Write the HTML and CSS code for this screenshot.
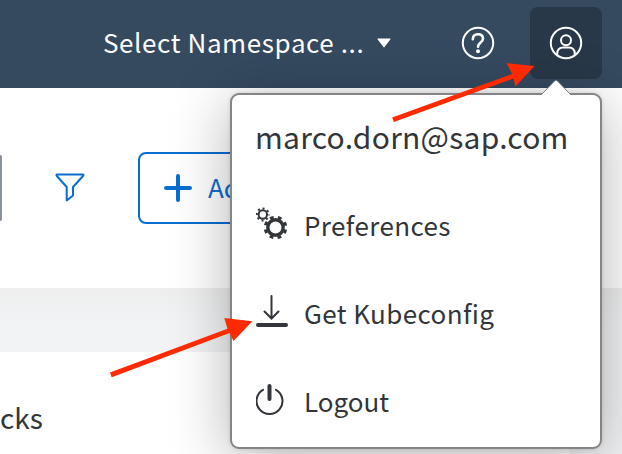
FILE: index.html
```html
<!DOCTYPE html>
<html lang="en">
<head>
<meta charset="utf-8">
<title>Console</title>
<link rel="stylesheet" href="styles.css">
</head>
<body>
<div class="app">
  <header class="shellbar">
    <button class="namespace"><span class="namespace-label">Select Namespace ...</span>
      <svg class="caret" width="14" height="10" viewBox="0 0 14 10"><path d="M1 .5h12q1 0 .3.900L7.600 9q-.6.700-1.200 0L.7 1.400Q0 .5 1 .5Z" fill="#fff"/></svg>
    </button>
    <button class="help" aria-label="Help">
      <svg width="34" height="34" viewBox="0 0 34 34" fill="none" stroke="#fff" stroke-width="2"><circle cx="17" cy="17" r="15.2"/><path d="M11.800 13.200Q12 8.200 17 8.200q5 0 5 4.500c0 3.600-5 4-5 8" stroke-width="2.600" stroke-linecap="round"/><circle cx="17" cy="25.200" r="2" fill="#fff" stroke="none"/></svg>
    </button>
    <button class="profile" aria-label="Profile">
      <svg width="34" height="34" viewBox="0 0 34 34" fill="none" stroke="#fff" stroke-width="2"><circle cx="17" cy="17" r="15.2"/><circle cx="17" cy="14.300" r="5"/><path d="M8.200 29.300v-1.300q0-6.500 6-6.500h5.600q6 0 6 6.500v1.300"/></svg>
    </button>
  </header>
  <section class="toolbar">
    <div class="search"></div>
    <svg class="filter" width="30" height="30" viewBox="0 0 30 30" fill="none" stroke="#0a6ed1" stroke-width="2" stroke-linejoin="round"><path d="M2 1.500h26q1 .5 0 1.500L18 14v8.500l-6.300 5V14L1.800 3Q1 2 2 1.500Z"/></svg>
    <button class="add">
      <svg width="28" height="28" viewBox="0 0 28 28" stroke="#0a6ed1" stroke-width="4" stroke-linecap="round"><path d="M2 14h24M14 2v24"/></svg>
      <span>Add</span>
    </button>
  </section>
  <main class="content"><article class="card"><h2>cks</h2></article></main>
</div>
<nav class="popover">
  <svg class="pointer" width="30" height="17" viewBox="0 0 30 17"><path d="M1 15 13.600 2Q15 .6 16.400 2L29 15v2H1Z" fill="#fff"/><path d="M1 15 13.600 2Q15 .6 16.400 2L29 15" fill="none" stroke="#7c8793"/></svg>
  <div class="row user"><span>marco.dorn@sap.com</span></div>
  <div class="row">
    <svg class="icon" width="32" height="34" viewBox="0 0 32 34" fill="none" stroke="#32363a"><circle cx="19.500" cy="20.500" r="7.700" stroke-width="3.400"/><circle cx="19.500" cy="20.500" r="10.300" stroke-width="3" stroke-dasharray="3.800 4.290" stroke-dashoffset="-2.100"/><circle cx="6.800" cy="7.500" r="4.200" stroke-width="2"/><circle cx="6.800" cy="7.500" r="6" stroke-width="2" stroke-dasharray="2 2.712" stroke-dashoffset="1"/></svg>
    <span class="preferences">Preferences</span>
  </div>
  <div class="row">
    <svg class="icon" width="32" height="34" viewBox="0 0 32 34" fill="none" stroke="#32363a" stroke-linecap="round"><path d="M15.500 1v22M8.500 16.500l7 7 7-7" stroke-width="2"/><path d="M2 30h28" stroke-width="4"/></svg>
    <span class="kubeconfig">Get Kubeconfig</span>
  </div>
  <div class="row">
    <svg class="icon" width="32" height="34" viewBox="0 0 32 34" fill="none" stroke="#32363a" stroke-linecap="round"><path d="M7 6.800a13 13 0 1 0 13 0" stroke-width="2"/><path d="M13.500 3v13" stroke-width="4"/></svg>
    <span class="logout">Logout</span>
  </div>
</nav>
<svg class="annotations" width="622" height="454" viewBox="0 0 622 454" fill="#ff2a00"><path d="m392.200 117.500 120-43.500-5.700-11 28 3-19 20.500-2-8-119.700 43.400Z"/><path d="m110 372.500 117.500-43.800-3.200-10.700 28 3.200L233.500 341l-4-8L111.700 377.200Z"/></svg>
</body>
</html>
```
FILE: styles.css
```css
* { box-sizing: border-box; }
body {
  margin: 0;
  width: 622px;
  height: 454px;
  overflow: hidden;
  position: relative;
  font-family: "Noto Sans CJK SC", "Open Sans", sans-serif;
  font-size: 26px;
  line-height: 36px;
  color: #32363a;
  background: #f2f3f4;
}
button { font: inherit; border: 0; padding: 0; background: none; color: inherit; }
svg { display: block; flex: none; }
span { white-space: nowrap; padding-bottom: 4px; }
.shellbar {
  height: 88px;
  display: flex;
  align-items: center;
  padding: 0 20px 2px 103px;
  background: #354a5f;
  color: #fff;
}
.namespace { display: flex; align-items: center; justify-content: space-between; width: 288px; }
.namespace-label { letter-spacing: 0.6px; padding-bottom: 2px; }
.help { margin-left: 70px; }
.profile {
  width: 72px;
  height: 72px;
  margin-left: auto;
  display: grid;
  place-items: center;
  border-radius: 8px;
  background: #283848;
}
.toolbar {
  height: 200px;
  display: flex;
  align-items: center;
  background: #fff;
}
.search { width: 2px; height: 66px; background: #89919a; border-radius: 0 3px 3px 0; }
.filter { margin-left: 53px; }
.add {
  width: 200px;
  height: 72px;
  margin-left: 53px;
  padding-left: 24px;
  display: flex;
  align-items: center;
  gap: 16px;
  border: 2px solid #0a6ed1;
  border-radius: 8px;
  color: #0a6ed1;
}
.add span { padding-bottom: 2px; }
.content { padding-top: 64px; background: linear-gradient(#eeeeee, #f1f3f5 36px); }
.card { width: 570px; height: 102px; padding-top: 46px; background: #fff; }
.card h2 { margin: 0; font-size: 28px; line-height: 38px; font-weight: 400; }
.popover {
  position: absolute;
  left: 230px;
  top: 93px;
  width: 372px;
  height: 356px;
  border: 2px solid #858585;
  border-radius: 9px;
  background: #fff;
  box-shadow: 0 10px 60px rgba(0, 0, 0, .3), 0 0 4px rgba(0, 0, 0, .12);
}
.pointer { position: absolute; left: 309px; top: -16px; }
.row { height: 88px; display: flex; align-items: center; gap: 16px; padding: 0 24px; }
.icon { margin-top: -6px; }
.user { padding-left: 23px; font-size: 30px; letter-spacing: 0.25px; }
.user span { padding-bottom: 6px; }
.preferences { letter-spacing: 0.4px; }
.kubeconfig { letter-spacing: 0.4px; }
.annotations { position: absolute; inset: 0; }
```
